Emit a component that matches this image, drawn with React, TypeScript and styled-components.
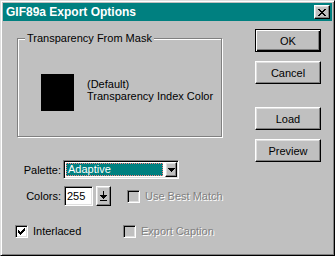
import React from 'react';
import styled, { createGlobalStyle, css } from 'styled-components';

const GlobalStyle = createGlobalStyle`
  html, body {
    margin: 0;
    padding: 0;
    background: #c0c0c0;
  }
  body {
    font-family: "Liberation Sans", Arial, sans-serif;
    font-size: 11px;
    color: #000;
  }
`;

// pixel glyphs, one rect per lit run
const CloseGlyph = () => (
  <svg width="8" height="7" viewBox="0 0 8 7" shapeRendering="crispEdges">
    <path
      fill="#000"
      d="M0 0h2v1H0zM6 0h2v1H6zM1 1h2v1H1zM5 1h2v1H5zM2 2h4v1H2zM3 3h2v1H3zM2 4h4v1H2zM1 5h2v1H1zM5 5h2v1H5zM0 6h2v1H0zM6 6h2v1H6z"
    />
  </svg>
);

const CheckGlyph = () => (
  <svg width="7" height="7" viewBox="0 0 7 7" shapeRendering="crispEdges">
    <path
      fill="#000"
      d="M6 0h1v1H6zM5 1h2v1H5zM0 2h1v1H0zM4 2h3v1H4zM0 3h2v1H0zM3 3h3v1H3zM0 4h5v1H0zM1 5h3v1H1zM2 6h1v1H2z"
    />
  </svg>
);

const ComboArrow = () => (
  <svg width="7" height="4" viewBox="0 0 7 4" shapeRendering="crispEdges">
    <path fill="#000" d="M0 0h7v1H0zM1 1h5v1H1zM2 2h3v1H2zM3 3h1v1H3z" />
  </svg>
);

const SpinArrow = () => (
  <svg width="7" height="10" viewBox="0 0 7 10" shapeRendering="crispEdges">
    <path fill="#000" d="M3 0h1v4H3zM0 4h7v1H0zM1 5h5v1H1zM2 6h3v1H2zM3 7h1v1H3zM0 9h7v1H0z" />
  </svg>
);

function CheckBox({ label, checked, disabled }: { label: string; checked?: boolean; disabled?: boolean }) {
  return (
    <CheckItem>
      <Box $disabled={disabled}>{checked && <CheckGlyph />}</Box>
      <CheckLabel $disabled={disabled}>{label}</CheckLabel>
    </CheckItem>
  );
}

export default function App() {
  return (
    <>
      <GlobalStyle />
      <Window>
        <TitleBar>
          <Title>GIF89a Export Options</Title>
          <CloseButton>
            <CloseGlyph />
          </CloseButton>
        </TitleBar>
        <Body>
          <LeftPane>
            <GroupBox>
              <Legend>Transparency From Mask</Legend>
              <GroupContent>
                <Swatch />
                <SwatchText>
                  (Default)
                  <br />
                  Transparency Index Color
                </SwatchText>
              </GroupContent>
            </GroupBox>

            <Form>
              <FieldLabel>Palette:</FieldLabel>
              <Select>
                <SelectValue>Adaptive</SelectValue>
                <DropButton>
                  <ComboArrow />
                </DropButton>
              </Select>

              <FieldLabel>Colors:</FieldLabel>
              <ColorsRow>
                <NumberInput>255</NumberInput>
                <SpinButton>
                  <SpinArrow />
                </SpinButton>
                <BestMatch>
                  <CheckBox label="Use Best Match" disabled />
                </BestMatch>
              </ColorsRow>
            </Form>

            <OptionRow>
              <OptionCell>
                <CheckBox label="Interlaced" checked />
              </OptionCell>
              <CheckBox label="Export Caption" disabled />
            </OptionRow>
          </LeftPane>

          <ButtonColumn>
            <Button $default>OK</Button>
            <Button>Cancel</Button>
            <Button $spaced>Load</Button>
            <Button>Preview</Button>
          </ButtonColumn>
        </Body>
      </Window>
    </>
  );
}

const raised = css`
  box-sizing: border-box;
  background: #c0c0c0;
  border: 1px solid;
  border-color: #fff #000 #000 #fff;
  box-shadow: inset -1px -1px 0 #808080, inset 1px 1px 0 #dfdfdf;
`;

const sunken = css`
  box-sizing: border-box;
  border: 1px solid;
  border-color: #808080 #fff #fff #808080;
  box-shadow: inset 1px 1px 0 #000, inset -1px -1px 0 #dfdfdf;
`;

const Window = styled.div`
  width: 335px;
  height: 256px;
  box-sizing: border-box;
  background: #c0c0c0;
  border: 1px solid;
  border-color: #dfdfdf #000 #000 #dfdfdf;
  box-shadow: inset 1px 1px 0 #fff, inset -1px -1px 0 #808080;
  padding: 2px;
  display: flex;
  flex-direction: column;
`;

const TitleBar = styled.div`
  height: 18px;
  flex-shrink: 0;
  background: #008080;
  display: flex;
  align-items: center;
  justify-content: space-between;
  padding: 0 2px 0 3px;
`;

const Title = styled.span`
  color: #fff;
  font-weight: bold;
  font-size: 12px;
  line-height: 18px;
  white-space: nowrap;
`;

const CloseButton = styled.div`
  ${raised};
  width: 16px;
  height: 14px;
  display: flex;
  align-items: center;
  justify-content: center;
  padding-right: 1px;
`;

const Body = styled.div`
  flex: 1;
  display: flex;
`;

const LeftPane = styled.div`
  flex: 1;
  display: flex;
  flex-direction: column;
  padding: 17px 0 0 12px;
`;

const GroupBox = styled.div`
  box-sizing: border-box;
  width: 205px;
  height: 99px;
  margin-left: 2px;
  border: 1px solid #808080;
  box-shadow: 1px 1px 0 #fff, inset 1px 1px 0 #fff;
`;

const Legend = styled.div`
  width: fit-content;
  margin: -7px 0 0 7px;
  padding: 0 2px;
  line-height: 13px;
  background: #c0c0c0;
  white-space: nowrap;
`;

const GroupContent = styled.div`
  display: flex;
  align-items: flex-start;
  margin: 29px 0 0 23px;
`;

const Swatch = styled.div`
  width: 33px;
  height: 37px;
  background: #000;
`;

const SwatchText = styled.div`
  margin: 4px 0 0 13px;
  line-height: 12px;
  white-space: nowrap;
`;

const Form = styled.div`
  display: grid;
  grid-template-columns: 46px auto;
  column-gap: 2px;
  row-gap: 7px;
  align-items: center;
  margin-top: 23px;
`;

const FieldLabel = styled.span`
  justify-self: end;
  line-height: 13px;
  padding-top: 1px;
`;

const Select = styled.div`
  ${sunken};
  width: 116px;
  height: 19px;
  padding: 1px;
  background: #fff;
  display: flex;
`;

const SelectValue = styled.div`
  flex: 1;
  margin: 1px 2px 1px 1px;
  padding-left: 1px;
  background: #008080;
  border: 1px dotted #ff7f7f;
  color: #fff;
  line-height: 11px;
`;

const DropButton = styled.div`
  ${raised};
  width: 12px;
  display: flex;
  align-items: center;
  justify-content: center;
`;

const ColorsRow = styled.div`
  display: flex;
  align-items: center;
`;

const NumberInput = styled.div`
  ${sunken};
  width: 29px;
  height: 20px;
  margin-left: 1px;
  padding: 0 0 0 2px;
  background: #fff;
  line-height: 18px;
`;

const SpinButton = styled.div`
  ${raised};
  width: 15px;
  height: 20px;
  margin-left: 3px;
  display: flex;
  align-items: center;
  justify-content: center;
`;

const BestMatch = styled.div`
  margin-left: 16px;
`;

const OptionRow = styled.div`
  display: flex;
  align-items: center;
  margin-top: 19px;
`;

const OptionCell = styled.div`
  width: 108px;
`;

const CheckItem = styled.div`
  display: flex;
  align-items: center;
  gap: 5px;
`;

const Box = styled.div<{ $disabled?: boolean }>`
  ${sunken};
  width: 13px;
  height: 13px;
  background: ${p => (p.$disabled ? '#c0c0c0' : '#fff')};
  display: flex;
  align-items: center;
  justify-content: center;
`;

const CheckLabel = styled.span<{ $disabled?: boolean }>`
  line-height: 13px;
  white-space: nowrap;
  color: ${p => (p.$disabled ? '#808080' : '#000')};
  text-shadow: ${p => (p.$disabled ? '1px 1px 0 #fff' : 'none')};
`;

const ButtonColumn = styled.div`
  display: flex;
  flex-direction: column;
  gap: 9px;
  padding: 8px 11px 0 0;
`;

const Button = styled.button<{ $default?: boolean; $spaced?: boolean }>`
  ${raised};
  width: 66px;
  height: 23px;
  padding: 0;
  font-family: inherit;
  font-size: 11px;
  color: #000;
  margin-top: ${p => (p.$spaced ? '14px' : '0')};
  ${p =>
    p.$default &&
    css`
      border-color: #000;
      box-shadow: inset 1px 1px 0 #fff, inset -1px -1px 0 #000, inset -2px -2px 0 #808080;
    `}
`;
